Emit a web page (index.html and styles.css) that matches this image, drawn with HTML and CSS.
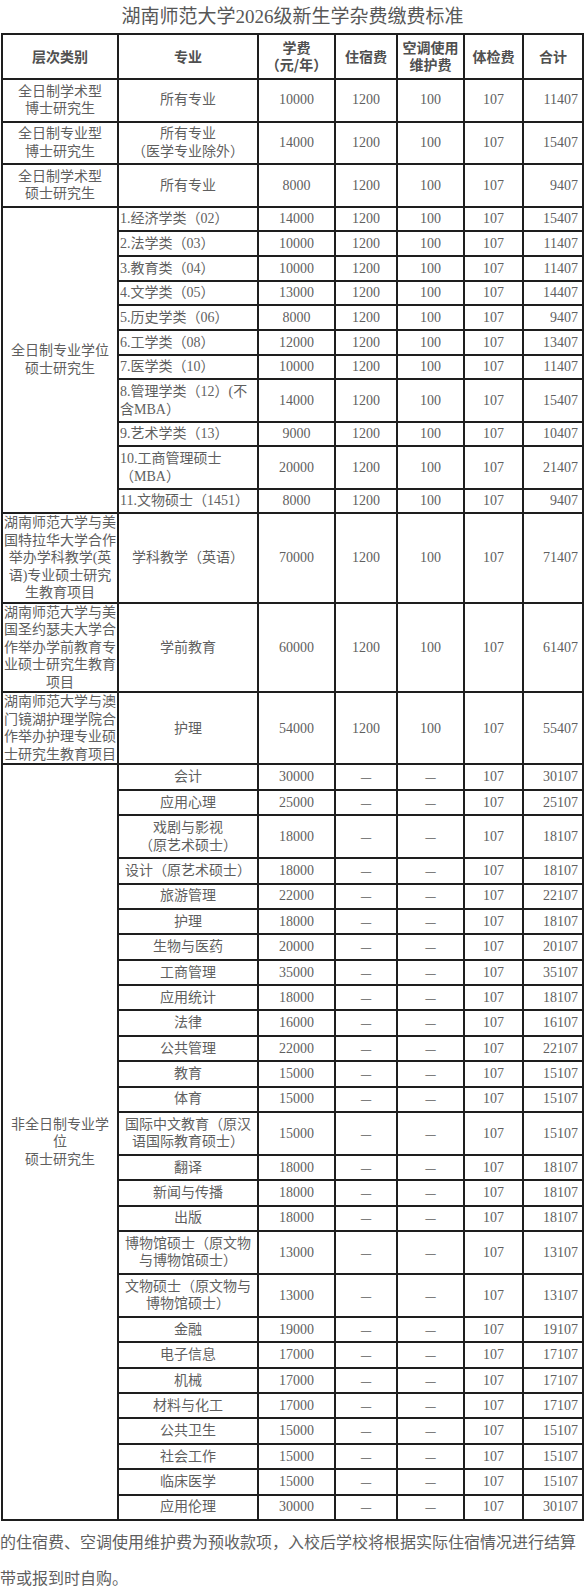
FILE: index.html
```html
<!DOCTYPE html>
<html lang="zh-CN">
<head>
<meta charset="utf-8">
<title>湖南师范大学2026级新生学杂费缴费标准</title>
<link rel="stylesheet" href="styles.css">
</head>
<body>
<div class="title">湖南师范大学2026级新生学杂费缴费标准</div>
<table class="fees">
<colgroup>
<col class="c1"><col class="c2"><col class="c3"><col class="c4"><col class="c5"><col class="c6"><col class="c7">
</colgroup>
<thead>
<tr class="head"><th>层次类别</th><th>专业</th><th>学费<br>（元/年）</th><th>住宿费</th><th>空调使用<br>维护费</th><th>体检费</th><th>合计</th></tr>
</thead>
<tbody>
<tr><td>全日制学术型<br>博士研究生</td><td>所有专业</td><td>10000</td><td>1200</td><td>100</td><td>107</td><td class="sum">11407</td></tr>
<tr><td>全日制专业型<br>博士研究生</td><td>所有专业<br>（医学专业除外）</td><td>14000</td><td>1200</td><td>100</td><td>107</td><td class="sum">15407</td></tr>
<tr><td>全日制学术型<br>硕士研究生</td><td>所有专业</td><td>8000</td><td>1200</td><td>100</td><td>107</td><td class="sum">9407</td></tr>
<tr class="ft"><td rowspan="11">全日制专业学位<br>硕士研究生</td><td class="left">1.经济学类（02）</td><td>14000</td><td>1200</td><td>100</td><td>107</td><td class="sum">15407</td></tr>
<tr class="ft"><td class="left">2.法学类（03）</td><td>10000</td><td>1200</td><td>100</td><td>107</td><td class="sum">11407</td></tr>
<tr class="ft"><td class="left">3.教育类（04）</td><td>10000</td><td>1200</td><td>100</td><td>107</td><td class="sum">11407</td></tr>
<tr class="ft"><td class="left">4.文学类（05）</td><td>13000</td><td>1200</td><td>100</td><td>107</td><td class="sum">14407</td></tr>
<tr class="ft"><td class="left">5.历史学类（06）</td><td>8000</td><td>1200</td><td>100</td><td>107</td><td class="sum">9407</td></tr>
<tr class="ft"><td class="left">6.工学类（08）</td><td>12000</td><td>1200</td><td>100</td><td>107</td><td class="sum">13407</td></tr>
<tr class="ft"><td class="left">7.医学类（10）</td><td>10000</td><td>1200</td><td>100</td><td>107</td><td class="sum">11407</td></tr>
<tr class="ft"><td class="left">8.管理学类（12）(不含MBA）</td><td>14000</td><td>1200</td><td>100</td><td>107</td><td class="sum">15407</td></tr>
<tr class="ft"><td class="left">9.艺术学类（13）</td><td>9000</td><td>1200</td><td>100</td><td>107</td><td class="sum">10407</td></tr>
<tr class="ft"><td class="left">10.工商管理硕士（MBA）</td><td>20000</td><td>1200</td><td>100</td><td>107</td><td class="sum">21407</td></tr>
<tr class="ft"><td class="left">11.文物硕士（1451）</td><td>8000</td><td>1200</td><td>100</td><td>107</td><td class="sum">9407</td></tr>
<tr><td class="proj">湖南师范大学与美国特拉华大学合作举办学科教学(英语)专业硕士研究生教育项目</td><td>学科教学（英语）</td><td>70000</td><td>1200</td><td>100</td><td>107</td><td class="sum">71407</td></tr>
<tr><td class="proj">湖南师范大学与美国圣约瑟夫大学合作举办学前教育专业硕士研究生教育项目</td><td>学前教育</td><td>60000</td><td>1200</td><td>100</td><td>107</td><td class="sum">61407</td></tr>
<tr><td class="proj">湖南师范大学与澳门镜湖护理学院合作举办护理专业硕士研究生教育项目</td><td>护理</td><td>54000</td><td>1200</td><td>100</td><td>107</td><td class="sum">55407</td></tr>
<tr class="nf"><td rowspan="27">非全日制专业学<br>位<br>硕士研究生</td><td>会计</td><td>30000</td><td class="dash">—</td><td class="dash">—</td><td>107</td><td class="sum">30107</td></tr>
<tr class="nf"><td>应用心理</td><td>25000</td><td class="dash">—</td><td class="dash">—</td><td>107</td><td class="sum">25107</td></tr>
<tr class="nf"><td>戏剧与影视<br>（原艺术硕士）</td><td>18000</td><td class="dash">—</td><td class="dash">—</td><td>107</td><td class="sum">18107</td></tr>
<tr class="nf"><td>设计（原艺术硕士）</td><td>18000</td><td class="dash">—</td><td class="dash">—</td><td>107</td><td class="sum">18107</td></tr>
<tr class="nf"><td>旅游管理</td><td>22000</td><td class="dash">—</td><td class="dash">—</td><td>107</td><td class="sum">22107</td></tr>
<tr class="nf"><td>护理</td><td>18000</td><td class="dash">—</td><td class="dash">—</td><td>107</td><td class="sum">18107</td></tr>
<tr class="nf"><td>生物与医药</td><td>20000</td><td class="dash">—</td><td class="dash">—</td><td>107</td><td class="sum">20107</td></tr>
<tr class="nf"><td>工商管理</td><td>35000</td><td class="dash">—</td><td class="dash">—</td><td>107</td><td class="sum">35107</td></tr>
<tr class="nf"><td>应用统计</td><td>18000</td><td class="dash">—</td><td class="dash">—</td><td>107</td><td class="sum">18107</td></tr>
<tr class="nf"><td>法律</td><td>16000</td><td class="dash">—</td><td class="dash">—</td><td>107</td><td class="sum">16107</td></tr>
<tr class="nf"><td>公共管理</td><td>22000</td><td class="dash">—</td><td class="dash">—</td><td>107</td><td class="sum">22107</td></tr>
<tr class="nf"><td>教育</td><td>15000</td><td class="dash">—</td><td class="dash">—</td><td>107</td><td class="sum">15107</td></tr>
<tr class="nf"><td>体育</td><td>15000</td><td class="dash">—</td><td class="dash">—</td><td>107</td><td class="sum">15107</td></tr>
<tr class="nf"><td>国际中文教育（原汉语国际教育硕士）</td><td>15000</td><td class="dash">—</td><td class="dash">—</td><td>107</td><td class="sum">15107</td></tr>
<tr class="nf"><td>翻译</td><td>18000</td><td class="dash">—</td><td class="dash">—</td><td>107</td><td class="sum">18107</td></tr>
<tr class="nf"><td>新闻与传播</td><td>18000</td><td class="dash">—</td><td class="dash">—</td><td>107</td><td class="sum">18107</td></tr>
<tr class="nf"><td>出版</td><td>18000</td><td class="dash">—</td><td class="dash">—</td><td>107</td><td class="sum">18107</td></tr>
<tr class="nf"><td>博物馆硕士（原文物与博物馆硕士）</td><td>13000</td><td class="dash">—</td><td class="dash">—</td><td>107</td><td class="sum">13107</td></tr>
<tr class="nf"><td>文物硕士（原文物与博物馆硕士）</td><td>13000</td><td class="dash">—</td><td class="dash">—</td><td>107</td><td class="sum">13107</td></tr>
<tr class="nf"><td>金融</td><td>19000</td><td class="dash">—</td><td class="dash">—</td><td>107</td><td class="sum">19107</td></tr>
<tr class="nf"><td>电子信息</td><td>17000</td><td class="dash">—</td><td class="dash">—</td><td>107</td><td class="sum">17107</td></tr>
<tr class="nf"><td>机械</td><td>17000</td><td class="dash">—</td><td class="dash">—</td><td>107</td><td class="sum">17107</td></tr>
<tr class="nf"><td>材料与化工</td><td>17000</td><td class="dash">—</td><td class="dash">—</td><td>107</td><td class="sum">17107</td></tr>
<tr class="nf"><td>公共卫生</td><td>15000</td><td class="dash">—</td><td class="dash">—</td><td>107</td><td class="sum">15107</td></tr>
<tr class="nf"><td>社会工作</td><td>15000</td><td class="dash">—</td><td class="dash">—</td><td>107</td><td class="sum">15107</td></tr>
<tr class="nf"><td>临床医学</td><td>15000</td><td class="dash">—</td><td class="dash">—</td><td>107</td><td class="sum">15107</td></tr>
<tr class="nf"><td>应用伦理</td><td>30000</td><td class="dash">—</td><td class="dash">—</td><td>107</td><td class="sum">30107</td></tr>
</tbody>
</table>
<p class="note">的住宿费、空调使用维护费为预收款项，入校后学校将根据实际住宿情况进行结算<br>带或报到时自购。</p>
</body>
</html>
```

FILE: styles.css
```css
html, body {
  margin: 0;
  padding: 0;
  background: #ffffff;
}
body {
  width: 585px;
  overflow: hidden;
  font-family: "Liberation Serif", "Noto Sans CJK SC", serif;
  font-size: 14px;
  color: #5f5f5f;
}
.title {
  height: 33px;
  line-height: 33px;
  text-align: center;
  font-size: 19px;
  color: #575757;
  white-space: nowrap;
}
.fees {
  border-collapse: collapse;
  table-layout: fixed;
  width: 583px;
  margin-left: 1px;
}
.c1 { width: 116px; }
.c2 { width: 140px; }
.c3 { width: 77px; }
.c4 { width: 62px; }
.c5 { width: 67px; }
.c6 { width: 59px; }
.c7 { width: 60px; }
.fees th,
.fees td {
  border: 2px solid #1e1e1e;
  padding: 2.7px 0;
  line-height: 17.6px;
  text-align: center;
  vertical-align: middle;
  font-weight: normal;
}
.fees th {
  font-family: "Noto Sans CJK SC", sans-serif;
  font-weight: bold;
  color: #505050;
  padding: 3.9px 0;
}
.fees .ft td {
  padding-top: 2.6px;
  padding-bottom: 2.5px;
}
.fees .nf td {
  padding-top: 2.9px;
  padding-bottom: 2.9px;
}
.fees td.left {
  text-align: left;
  padding-left: 1px;
}
.fees td.proj {
  padding: 0;
  line-height: 17.5px;
}
.fees td.sum {
  text-align: right;
  padding-right: 4px;
}
.fees td.dash {
  font-family: "Noto Sans CJK SC", sans-serif;
  font-size: 13px;
}
.note {
  margin: 2px 0 0;
  font-family: "Noto Sans CJK SC", sans-serif;
  font-size: 16px;
  line-height: 36px;
  color: #5f5f5f;
  white-space: nowrap;
}
```
